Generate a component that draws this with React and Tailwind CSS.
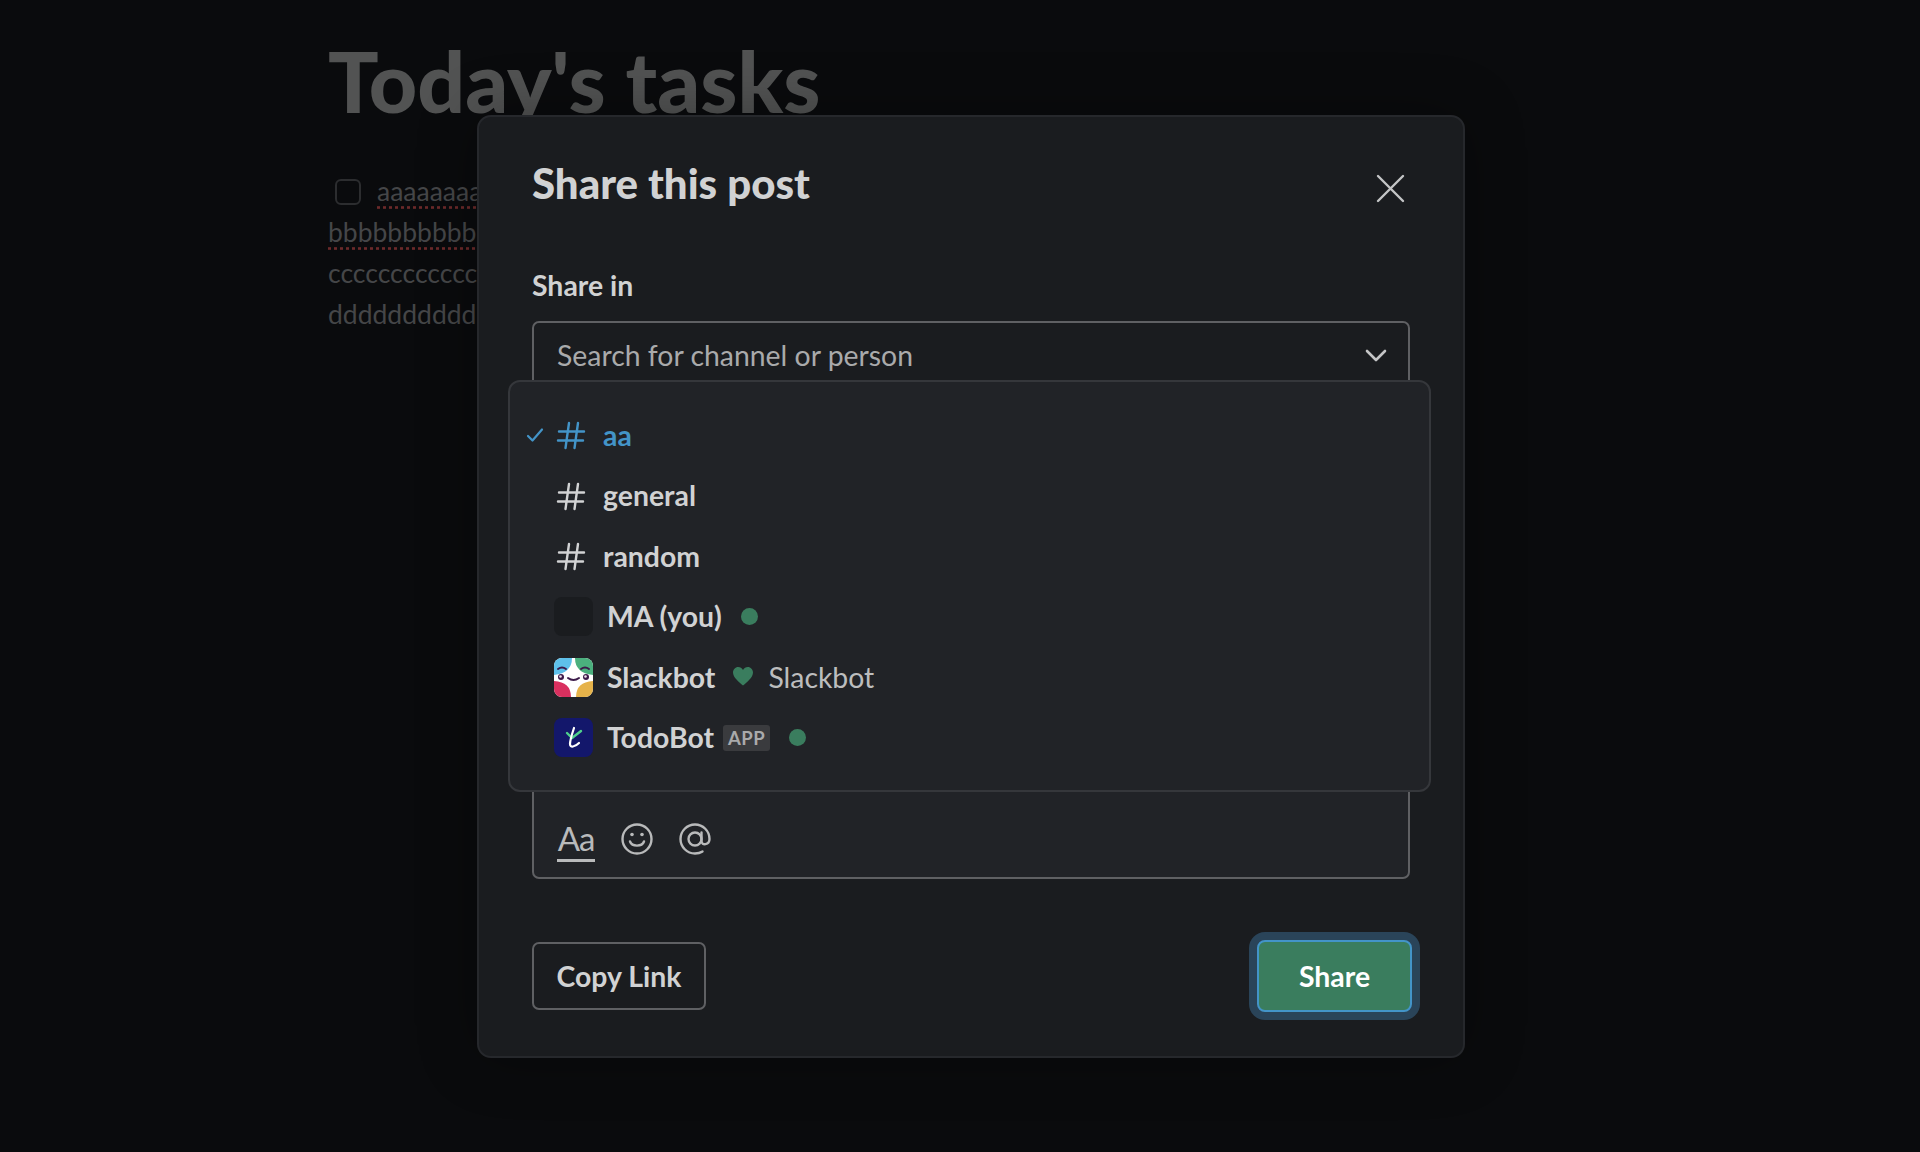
import React from "react";

const font = { fontFamily: '"Lato", "Liberation Sans", sans-serif' };

function Hash({ color }) {
  return (
    <svg width="30" height="30" viewBox="0 0 30 30" fill="none" stroke={color} strokeWidth="2.4" strokeLinecap="round" className="shrink-0">
      <path d="M3 11.5H28M2 20.5H27M13 3L9.5 28M22 3L18.5 28" />
    </svg>
  );
}

function Dot() {
  return <span className="block w-[17px] h-[17px] rounded-full bg-[#3a7d5e] shrink-0" />;
}

function Slackbot() {
  return (
    <svg width="39" height="39" viewBox="0 0 39 39" className="shrink-0 rounded-[8px]">
      <rect width="39" height="39" fill="#fff" />
      <path d="M0 0H18Q18 15 0 17Z" fill="#5ec0ea" />
      <path d="M39 0H21Q21 15 39 17Z" fill="#4bb07e" />
      <path d="M0 39H17Q17 24 0 23Z" fill="#d9305f" />
      <path d="M39 39H22Q22 24 39 23Z" fill="#e6b34a" />
      <path d="M4 11Q8 8 12 11M27 11Q31 8 35 11" stroke="#3c1a4a" strokeWidth="2" fill="none" strokeLinecap="round" />
      <circle cx="7" cy="19" r="3" fill="#3c1a4a" />
      <circle cx="32" cy="19" r="3" fill="#3c1a4a" />
      <circle cx="6.5" cy="18.5" r="1.3" fill="#f3e6ee" />
      <circle cx="31.5" cy="18.5" r="1.3" fill="#f3e6ee" />
      <path d="M14 20Q19.5 24 25 20" stroke="#3c1a4a" strokeWidth="2" fill="none" strokeLinecap="round" />
    </svg>
  );
}

function TodoBot() {
  return (
    <svg width="39" height="39" viewBox="0 0 39 39" className="shrink-0 rounded-[8px]">
      <rect width="39" height="39" fill="#13176b" />
      <path d="M13 15L18 20L27 13" stroke="#4fd08c" strokeWidth="2.4" fill="none" strokeLinecap="round" strokeLinejoin="round" />
      <path d="M20 10C18 16 16 23 16 26C16 30 21 29 25 25" stroke="#fff" strokeWidth="2.2" fill="none" strokeLinecap="round" />
    </svg>
  );
}

function Row({ icon, children }) {
  return (
    <div className="flex items-center h-[60.5px] pl-[46px] text-[28.4px] font-bold text-[#d1d2d3] gap-[17px]">
      {icon}
      {children}
    </div>
  );
}

export default function App() {
  return (
    <div className="relative w-[1920px] h-[1152px] overflow-hidden bg-[#0a0b0d]" style={font}>
      <div className="pl-[328px] pt-[31px] text-[#4c4d4e]">
        <h1 className="text-[84px] leading-[100px] font-black text-[#525353]">Today's tasks</h1>
        <div className="mt-[40px] text-[26.5px] leading-[41px] text-[#454648]">
          <div className="flex items-center">
            <span className="ml-[7px] w-[26px] h-[26px] rounded-[6px] border-2 border-[#2c2d2f]" />
            <span className="ml-[16px] underline decoration-dotted decoration-[#6b2a2a] underline-offset-[5px]">aaaaaaaaaa</span>
          </div>
          <div className="underline decoration-dotted decoration-[#6b2a2a] underline-offset-[5px]">bbbbbbbbbbbbbbb</div>
          <div>ccccccccccccccc</div>
          <div>dddddddddddd</div>
        </div>
      </div>

      <div className="absolute left-[477px] top-[115px] w-[988px] h-[943px] rounded-[14px] border-2 border-[#26282c] bg-[#1a1c1f] px-[53px] pt-[29px] flex flex-col shadow-[0_0_60px_rgba(0,0,0,0.3)]">
        <div className="flex items-center justify-between h-[74px]">
          <h2 className="text-[42px] leading-[50px] font-black text-[#d1d2d3]">Share this post</h2>
          <svg width="30" height="30" viewBox="0 0 30 30" fill="none" stroke="#c4c5c6" strokeWidth="2.4" strokeLinecap="round" className="mr-[5px] mt-[9px]">
            <path d="M3 3L28 28M28 3L3 28" />
          </svg>
        </div>
        <div className="mt-[47px] text-[28.4px] leading-[36px] font-bold text-[#d1d2d3]">Share in</div>
        <div className="mt-[18px] h-[80px] rounded-[7px] border-2 border-[#5f6063] flex items-start justify-between pl-[23px] pr-[21px] pt-[14px]">
          <span className="text-[28.4px] leading-[36px] text-[#a9aaab]">Search for channel or person</span>
          <svg width="22" height="14" viewBox="0 0 22 14" fill="none" stroke="#c4c5c6" strokeWidth="2.6" strokeLinecap="round" strokeLinejoin="round" className="mt-[12px]">
            <path d="M2 2L11 11L20 2" />
          </svg>
        </div>
        <div className="mt-[198px] h-[280px] rounded-[7px] border-2 border-[#5f6063] bg-[#212327] flex flex-col justify-end pl-[23px] pb-[15px]">
          <div className="flex items-center gap-[26px] text-[#b9babb]">
            <span className="w-[38px] h-[46px] flex items-center justify-center border-b-[3px] border-[#b9babb] text-[33px] leading-[42px] tracking-[-1px]">Aa</span>
            <svg width="32" height="32" viewBox="0 0 32 32" fill="none" stroke="currentColor" strokeWidth="2.4" strokeLinecap="round">
              <circle cx="16" cy="16" r="14.5" />
              <path d="M9 18.5C11 24 21 24 23 18.5" />
              <circle cx="11" cy="11.5" r="1.8" fill="currentColor" stroke="none" />
              <circle cx="21" cy="11.5" r="1.8" fill="currentColor" stroke="none" />
            </svg>
            <svg width="32" height="32" viewBox="0 0 32 32" fill="none" stroke="currentColor" strokeWidth="2.4" strokeLinecap="round">
              <circle cx="16" cy="16" r="6.5" />
              <path d="M22.5 9.5V18C22.5 23 30.5 22 30.5 16C30.5 8 24 1.5 16 1.5C8 1.5 1.5 8 1.5 16C1.5 24 8 30.5 16 30.5C19 30.5 21.5 29.8 23.5 28.5" />
            </svg>
          </div>
        </div>
        <div className="mt-[61px] flex items-center justify-between">
          <button className="w-[174px] h-[68px] rounded-[7px] border-2 border-[#5f6063] text-[28.4px] font-bold text-[#d1d2d3]">Copy Link</button>
          <button className="w-[155px] h-[72px] -mr-[2px] rounded-[8px] border-2 border-[#4394c8] bg-[#3a7d5e] text-[28.4px] font-bold text-white shadow-[0_0_0_8px_#2a4459]">Share</button>
        </div>
      </div>

      <div className="absolute left-[508px] top-[380px] w-[923px] h-[412px] rounded-[12px] border-2 border-[#35373b] bg-[#212327] pt-[23px]">
        <div className="relative">
          <svg width="18" height="16" viewBox="0 0 18 16" fill="none" stroke="#4394c8" strokeWidth="2.2" strokeLinecap="round" strokeLinejoin="round" className="absolute left-[16px] top-[22px]">
            <path d="M2 9L6.5 13.5L16 2.5" />
          </svg>
          <Row icon={<Hash color="#4394c8" />}><span className="text-[#4394c8]">aa</span></Row>
        </div>
        <Row icon={<Hash color="#d1d2d3" />}>general</Row>
        <Row icon={<Hash color="#d1d2d3" />}>random</Row>
        <div className="flex items-center h-[60.5px] pl-[44px] text-[28.4px] font-bold text-[#d1d2d3] gap-[14px]">
          <span className="block w-[39px] h-[39px] rounded-[8px] bg-[#1a1c1f] shrink-0" />
          <span>MA (you)</span>
          <span className="ml-[5px]"><Dot /></span>
        </div>
        <div className="flex items-center h-[60.5px] pl-[44px] text-[28.4px] font-bold text-[#d1d2d3]">
          <Slackbot />
          <span className="ml-[14px]">Slackbot</span>
          <svg width="20" height="19" viewBox="0 0 20 19" fill="#3a7d5e" className="ml-[18px] -mt-[2px]">
            <path d="M10 18.5C6 15 0 10.5 0 5.5C0 2.5 2.3 0 5.2 0C7.2 0 9 1 10 3C11 1 12.8 0 14.8 0C17.7 0 20 2.5 20 5.5C20 10.5 14 15 10 18.5Z" />
          </svg>
          <span className="ml-[15px] font-normal text-[#bcbdbe]">Slackbot</span>
        </div>
        <div className="flex items-center h-[60.5px] pl-[44px] text-[28.4px] font-bold text-[#d1d2d3]">
          <TodoBot />
          <span className="ml-[14px]">TodoBot</span>
          <span className="ml-[9px] px-[5px] h-[26px] rounded-[3px] bg-[#3a3b3e] text-[#a9aaab] text-[18.5px] leading-[26px] font-bold tracking-[0.5px]">APP</span>
          <span className="ml-[19px]"><Dot /></span>
        </div>
      </div>
    </div>
  );
}
